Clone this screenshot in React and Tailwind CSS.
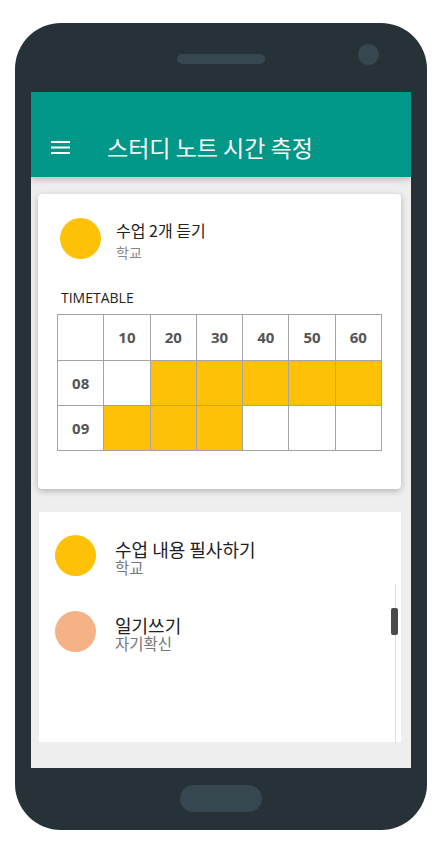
const slots = {
  header: ['10', '20', '30', '40', '50', '60'],
  rows: [
    { hour: '08', filled: [false, true, true, true, true, true] },
    { hour: '09', filled: [true, true, true, false, false, false] },
  ],
};

const tasks = [
  { title: '수업 내용 필사하기', tag: '학교', color: 'bg-[#ffc107]' },
  { title: '일기쓰기', tag: '자기확신', color: 'bg-[#f4b286]' },
];

function Hamburger() {
  return (
    <svg width="19" height="13" viewBox="0 0 19 13" fill="#ffffff">
      <rect x="0" y="0" width="19" height="2" />
      <rect x="0" y="5.5" width="19" height="2" />
      <rect x="0" y="11" width="19" height="2" />
    </svg>
  );
}

function Timetable() {
  return (
    <table className="w-[325px] h-[137px] border-collapse table-fixed font-['Open_Sans',sans-serif] text-[15px] font-bold text-[#555555]">
      <tbody>
        <tr className="h-[46px]">
          <td className="border border-[#a4a4a4]"></td>
          {slots.header.map((m) => (
            <td key={m} className="border border-[#a4a4a4] text-center">{m}</td>
          ))}
        </tr>
        {slots.rows.map((row) => (
          <tr key={row.hour} className="h-[45px]">
            <td className="border border-[#a4a4a4] text-center">{row.hour}</td>
            {row.filled.map((on, i) => (
              <td key={i} className={`border border-[#a4a4a4] ${on ? 'bg-[#ffc107]' : 'bg-white'}`}></td>
            ))}
          </tr>
        ))}
      </tbody>
    </table>
  );
}

export default function App() {
  return (
    <div className="w-[445px] h-[852px] bg-white overflow-hidden font-['Noto_Sans_CJK_KR',sans-serif]">
      <div className="relative ml-[15px] mt-[23px] w-[412px] h-[807px] rounded-[46px] bg-[#263238] flex flex-col">
        {/* top bezel */}
        <div className="h-[69px] flex justify-center pt-[31px]">
          <div className="w-[88px] h-[10px] rounded-full bg-[#37474f]"></div>
        </div>
        <div className="absolute left-[343px] top-[21px] w-[21px] h-[21px] rounded-full bg-[#37474f]"></div>

        {/* screen */}
        <div className="mx-[16px] h-[676px] bg-[#eeeeee] flex flex-col overflow-hidden">
          <div className="relative z-10 h-[85px] bg-[#009688] shadow-[0_3px_6px_rgba(0,0,0,0.2)] flex items-center pt-[25px]">
            <div className="ml-[20px] flex">
              <Hamburger />
            </div>
            <span className="ml-[37px] text-[23px] leading-[30px] text-white">스터디 노트 시간 측정</span>
          </div>

          {/* current task card */}
          <div className="mt-[17px] ml-[7px] w-[363px] h-[295px] bg-white rounded-[4px] shadow-[0_2px_6px_rgba(0,0,0,0.25)] flex flex-col">
            <div className="h-[68px] pt-[24px] pl-[22px] flex items-start">
              <div className="w-[41px] h-[41px] rounded-full bg-[#ffc107]"></div>
              <div className="ml-[15px] mt-[2px] flex flex-col">
                <span className="text-[16px] leading-[21px] text-[#222222]">수업 2개 듣기</span>
                <span className="mt-[2px] text-[14px] leading-[19px] text-[#888888]">학교</span>
              </div>
            </div>
            <div className="mt-[26px] pl-[23px] font-['Open_Sans',sans-serif] text-[14px] leading-[20px] text-[#222222]">TIMETABLE</div>
            <div className="mt-[6px] ml-[19px]">
              <Timetable />
            </div>
          </div>

          {/* task list */}
          <div className="relative mt-[23px] ml-[8px] w-[362px] h-[230px] bg-white pt-[23px]">
            {tasks.map((t) => (
              <div key={t.title} className="h-[76px] pl-[16px] flex items-start">
                <div className={`w-[41px] h-[41px] rounded-full ${t.color}`}></div>
                <div className="ml-[19px] mt-[5px] flex flex-col">
                  <span className="text-[18px] leading-[18px] text-[#212121]">{t.title}</span>
                  <span className="text-[15.5px] leading-[18px] text-[#777777]">{t.tag}</span>
                </div>
              </div>
            ))}
            <div className="absolute left-[356px] top-[72px] w-px h-[159px] bg-[#dddddd]"></div>
            <div className="absolute left-[352px] top-[96px] w-[7px] h-[27px] rounded-[2px] bg-[#4a4a4a]"></div>
          </div>
        </div>

        {/* home button */}
        <div className="mt-[17px] flex justify-center">
          <div className="w-[82px] h-[27px] rounded-full bg-[#37474f]"></div>
        </div>
      </div>
    </div>
  );
}
